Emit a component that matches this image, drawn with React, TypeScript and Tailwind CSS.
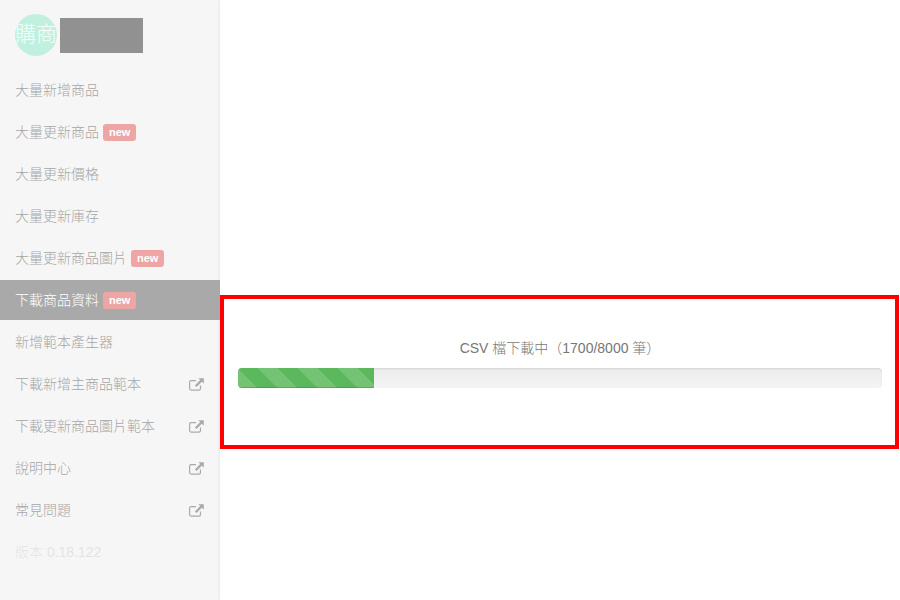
import React from "react";

const CJK = "font-['Helvetica_Neue','Liberation_Sans','Noto_Sans_CJK_TC',sans-serif]";

function Ext() {
  return (
    <svg width="15" height="13" viewBox="0 0 15 13" fill="none" className="shrink-0">
      <path d="M11.5 7.5v3a1.6 1.6 0 0 1-1.6 1.6H2.1A1.6 1.6 0 0 1 .6 10.500V4.200A1.600 1.600 0 0 1 2.100 2.600H7" stroke="#aaaaaa" strokeWidth="1.200" />
      <path d="M9.300 0.200h5.500v5.500l-2-2-5.300 5.300-1.600-1.600 5.300-5.300z" fill="#aaaaaa" />
    </svg>
  );
}

function New() {
  return (
    <span className="ml-1 rounded-[3px] bg-[#eea5a5] px-[6px] h-[17px] flex items-center text-[11px] font-bold leading-none text-white font-['Liberation_Sans',sans-serif]">
      new
    </span>
  );
}

const items = [
  { t: "大量新增商品" },
  { t: "大量更新商品", n: true },
  { t: "大量更新價格" },
  { t: "大量更新庫存" },
  { t: "大量更新商品圖片", n: true },
  { t: "下載商品資料", n: true, a: true },
  { t: "新增範本產生器" },
  { t: "下載新增主商品範本", e: true },
  { t: "下載更新商品圖片範本", e: true },
  { t: "說明中心", e: true },
  { t: "常見問題", e: true },
];

export default function App() {
  return (
    <div className={`flex h-[600px] w-[900px] overflow-hidden bg-white ${CJK}`}>
      <aside className="w-[220px] shrink-0 bg-[#f6f6f6] shadow-[inset_-3px_0_3px_-2px_rgba(0,0,0,0.06)]">
        <div className="flex h-[70px] items-start pl-[15px] pt-[14px]">
          <div className="flex h-[42px] w-[42px] items-center justify-center overflow-hidden whitespace-nowrap rounded-full bg-[#c2f0df] pb-[2px] text-[21px] font-extralight text-white/85">
            購商
          </div>
          <div className="ml-[3px] mt-[4px] h-[35px] w-[83px] bg-[#919191]" />
        </div>
        <nav className="flex flex-col gap-[2px]">
          {items.map((i) => (
            <div
              key={i.t}
              className={`flex h-[40px] items-center px-[15px] text-[14px] font-light ${i.a ? "bg-[#a9a9a9] text-white" : "text-[#a6a6a6]"}`}
            >
              <span>{i.t}</span>
              {i.n && <New />}
              {i.e && (
                <span className="ml-auto pr-[1px]">
                  <Ext />
                </span>
              )}
            </div>
          ))}
          <div className="flex h-[40px] items-center px-[15px] text-[14px] font-light text-[#e4e4e4]">
            版本 0.18.122
          </div>
        </nav>
      </aside>
      <main className="flex-1">
        <div className="mt-[295px] h-[154px] w-[679px] border-4 border-[#ff0000] pl-[14px] pr-[13px] pt-[39px]">
          <div className="h-[20px] text-center text-[14px] font-light leading-[20px] text-[#777777]">
            CSV 檔下載中（1700/8000 筆）
          </div>
          <div className="mt-[10px] h-[20px] overflow-hidden rounded bg-[linear-gradient(to_bottom,#ebebeb,#f5f5f5)] shadow-[inset_0_1px_2px_rgba(0,0,0,0.1)]">
            <div className="h-full w-[136px] bg-[#5cb85c] bg-[linear-gradient(45deg,rgba(255,255,255,0.15)_25%,transparent_25%,transparent_50%,rgba(255,255,255,0.15)_50%,rgba(255,255,255,0.15)_75%,transparent_75%,transparent)] bg-[length:40px_40px] bg-[position:20px_0] shadow-[inset_0_-1px_0_rgba(0,0,0,0.15)]" />
          </div>
        </div>
      </main>
    </div>
  );
}
